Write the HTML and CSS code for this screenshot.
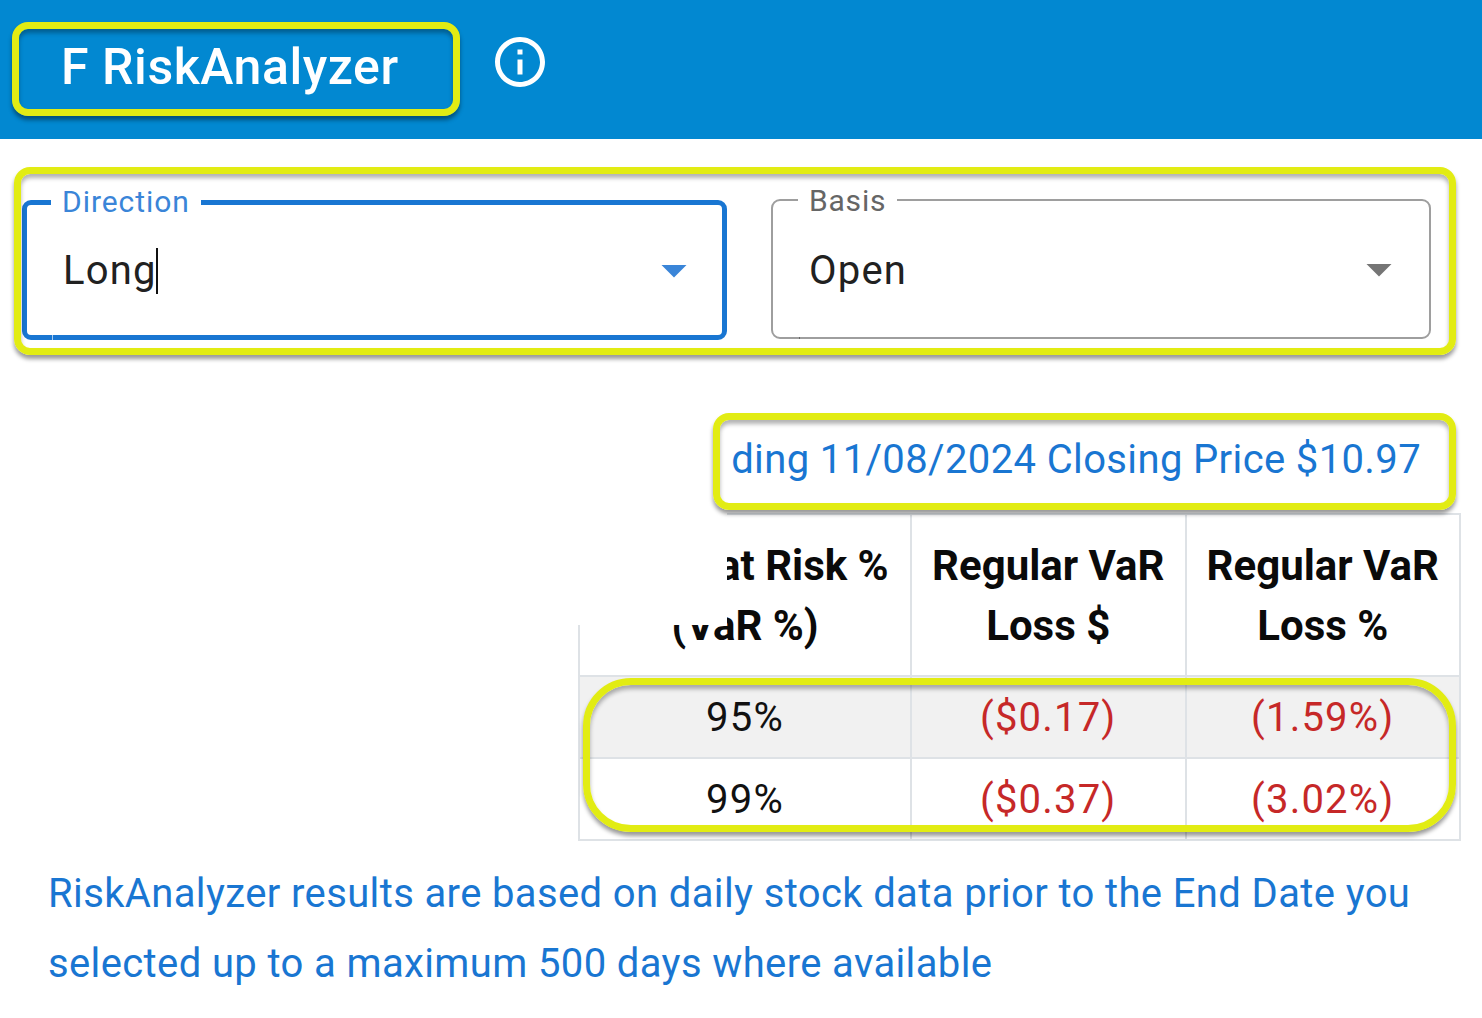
FILE: index.html
```html
<!DOCTYPE html>
<html lang="en">
<head>
    <meta charset="UTF-8">
    <meta name="viewport" content="width=device-width, initial-scale=1.0">
    <title>F RiskAnalyzer</title>
    <link rel="stylesheet" href="styles.css">
</head>
<body>
<header class="app-bar">
    <h1 class="app-title">F RiskAnalyzer</h1>
    <svg class="info-icon" viewBox="0 0 24 24"><path d="M11 7h2v2h-2zm0 4h2v6h-2zm1-9C6.48 2 2 6.48 2 12s4.48 10 10 10 10-4.48 10-10S17.52 2 12 2zm0 18c-4.41 0-8-3.59-8-8s3.59-8 8-8 8 3.59 8 8-3.59 8-8 8z"/></svg>
</header>

<main class="content">
    <div class="fields">
        <div class="field field-direction">
            <span class="field-label">Direction</span>
            <span class="field-value">Long<span class="caret"></span></span>
            <svg class="arrow" viewBox="0 0 24 24"><path d="M7 10l5 5 5-5z"/></svg>
        </div>
        <div class="field field-basis">
            <span class="field-label">Basis</span>
            <span class="field-value">Open</span>
            <svg class="arrow" viewBox="0 0 24 24"><path d="M7 10l5 5 5-5z"/></svg>
        </div>
    </div>

    <p class="closing">ding 11/08/2024 Closing Price $10.97</p>

    <table class="var-table">
        <thead>
            <tr>
                <th>Value at Risk %<br>(VaR %)</th>
                <th>Regular VaR<br>Loss $</th>
                <th>Regular VaR<br>Loss %</th>
            </tr>
        </thead>
        <tbody>
            <tr>
                <td>95%</td>
                <td class="loss">($0.17)</td>
                <td class="loss">(1.59%)</td>
            </tr>
            <tr>
                <td>99%</td>
                <td class="loss">($0.37)</td>
                <td class="loss">(3.02%)</td>
            </tr>
        </tbody>
    </table>

    <p class="note">RiskAnalyzer results are based on daily stock data prior to the End Date you selected up to a maximum 500 days where available</p>
</main>

<!-- white patch from the screenshot crop, then the yellow call-out frames -->
<div class="patch"></div>
<div class="frame frame-title"></div>
<div class="frame frame-fields"></div>
<div class="frame frame-closing"></div>
<div class="frame frame-rows"></div>
</body>
</html>
```

FILE: styles.css
```css
body {
    margin: 0;
    font-family: Roboto, "Liberation Sans", sans-serif;
    background: white;
    color: #111;
    overflow: hidden;
}

.app-bar {
    height: 139px;
    background-color: #0288d1;
    display: flex;
    align-items: center;
    padding-left: 61px;
    color: white;
}

.app-title {
    margin: 0 0 6px 0;
    font-size: 50px;
    font-weight: 500;
    letter-spacing: 0.55px;
    line-height: 60px;
}

.info-icon {
    width: 60px;
    height: 60px;
    margin: 0 0 15px 91px;
    fill: white;
}

.content {
    padding-top: 61px;
}

.fields {
    display: flex;
    align-items: flex-start;
    gap: 44px;
    padding-left: 22px;
}

.field {
    position: relative;
    box-sizing: border-box;
    height: 140px;
    display: flex;
    align-items: center;
    justify-content: space-between;
    border-radius: 9px;
}

.field::after {
    content: "";
    position: absolute;
    width: 1px;
}

.field-direction {
    width: 705px;
    border: 5px solid #1976d2;
    padding: 0 24px 0 36px;
}

.field-direction::after {
    left: 25px;
    bottom: -5px;
    height: 5px;
    background: #a9cbee;
}

.field-basis {
    width: 660px;
    margin-top: -1px;
    border: 2px solid #9e9e9e;
    padding: 0 26px 1px 36px;
}

.field-basis::after {
    left: 26px;
    bottom: -2px;
    height: 2px;
    background: #666;
}

.field-label {
    position: absolute;
    top: -20px;
    left: 24px;
    padding: 0 11px;
    background: white;
    font-size: 30px;
    line-height: 34px;
    letter-spacing: 0.95px;
}

.field-direction .field-label {
    color: #3a85d8;
}

.field-basis .field-label {
    top: -17px;
    left: 25px;
    letter-spacing: 0.8px;
    color: #666;
}

.field-value {
    margin-top: 2px;
    font-size: 40px;
    line-height: 46px;
    letter-spacing: 1.2px;
    color: #212121;
}

.field-basis .field-value {
    margin-top: 4px;
}

.caret {
    display: inline-block;
    width: 2px;
    height: 46px;
    margin-left: -1px;
    background: #111;
    vertical-align: top;
}

.arrow {
    width: 60px;
    height: 60px;
    margin-right: -6px;
}

.field-direction .arrow {
    fill: #3a85d8;
}

.field-basis .arrow {
    fill: #757575;
}

.closing {
    margin: 97px 61px 0 0;
    text-align: right;
    font-size: 40px;
    line-height: 46px;
    letter-spacing: 0.37px;
    color: #1976d2;
}

.var-table {
    margin: 30px 21px 0 auto;
    width: 883px;
    border-collapse: collapse;
    table-layout: fixed;
    font-size: 40px;
}

.var-table th,
.var-table td {
    border: 2px solid #dee2e6;
    text-align: center;
    padding: 0;
}

.var-table th {
    height: 159px;
    padding-top: 1px;
    font-size: 42px;
    font-weight: 700;
    line-height: 60px;
    color: #0a0a0a;
}

.var-table th:first-child {
    width: 330px;
}

.var-table td {
    height: 80px;
    letter-spacing: 1.2px;
}

.var-table tbody tr:first-child {
    background: #f1f1f1;
}

.loss {
    color: #c62828;
}

.note {
    margin: 18px 60px 0 48px;
    font-size: 40px;
    line-height: 70px;
    letter-spacing: 0.375px;
    color: #1976d2;
}

.patch {
    position: absolute;
    left: 560px;
    top: 510px;
    width: 167px;
    height: 115px;
    background: white;
}

.frame {
    position: absolute;
    box-sizing: border-box;
    border: 7px solid #e2ec13;
    box-shadow: 0 4px 4px rgba(0, 0, 0, 0.4), inset 0 4px 4px rgba(0, 0, 0, 0.3);
}

.frame-title {
    left: 12px;
    top: 22px;
    width: 448px;
    height: 94px;
    border-radius: 16px;
}

.frame-fields {
    left: 14px;
    top: 167px;
    width: 1442px;
    height: 188px;
    border-radius: 16px;
}

.frame-closing {
    left: 713px;
    top: 413px;
    width: 743px;
    height: 97px;
    border-radius: 16px;
}

.frame-rows {
    left: 583px;
    top: 678px;
    width: 873px;
    height: 154px;
    border-radius: 48px;
}
```
